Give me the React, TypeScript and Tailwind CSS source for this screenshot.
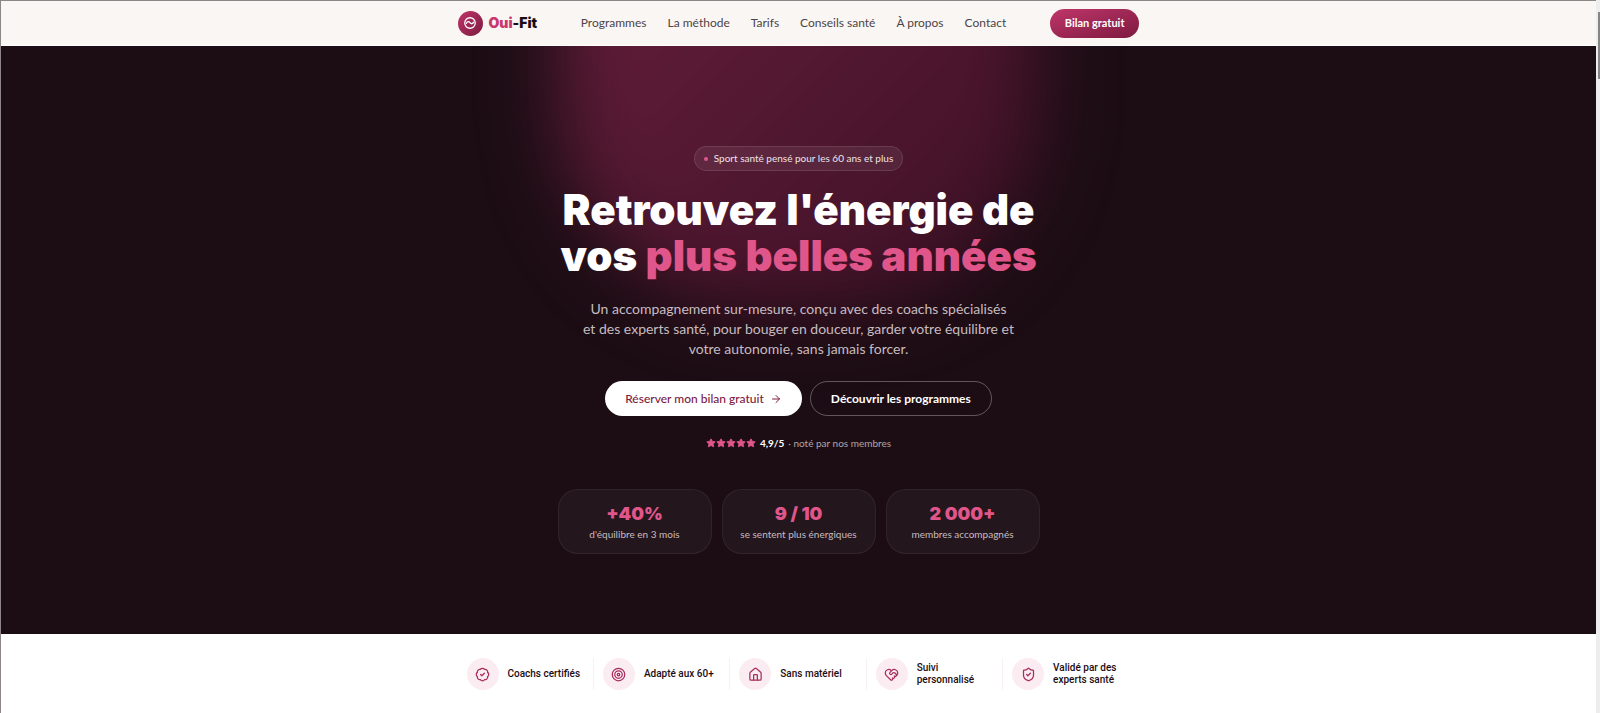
import type { ReactNode } from 'react';
import { ArrowRight, BadgeCheck, HeartHandshake, House, ShieldCheck, Star, Target } from 'lucide-react';

const links = ['Programmes', 'La méthode', 'Tarifs', 'Conseils santé', 'À propos', 'Contact'];

const stats = [
  { value: '+40%', label: "d'équilibre en 3 mois" },
  { value: '9 / 10', label: 'se sentent plus énergiques' },
  { value: '2 000+', label: 'membres accompagnés' },
];

const iconClass = 'size-[15px]';

const assurances: { label: string; icon: ReactNode }[] = [
  { label: 'Coachs certifiés', icon: <BadgeCheck className={iconClass} /> },
  { label: 'Adapté aux 60+', icon: <Target className={iconClass} /> },
  { label: 'Sans matériel', icon: <House className={iconClass} /> },
  { label: 'Suivi personnalisé', icon: <HeartHandshake className={iconClass} /> },
  { label: 'Validé par des experts santé', icon: <ShieldCheck className={iconClass} /> },
];

function Logo() {
  return (
    <a href="#" className="flex items-center gap-1.5">
      <span className="flex size-[25px] items-center justify-center rounded-full bg-linear-to-br from-[#c0366a] to-[#7d1a40] text-white">
        <svg viewBox="0 0 24 24" className="size-3.5" fill="none" stroke="currentColor" strokeWidth="2.2" strokeLinecap="round" aria-hidden="true">
          <circle cx="12" cy="12" r="9" />
          <path d="M6 12.500c1.500-3.500 4-3.500 6-1s4.500 2.500 6-1" />
        </svg>
      </span>
      <span className="font-['Inter','Liberation_Sans',sans-serif] text-sm font-black text-[#1c0d14]">
        <span className="text-[#c9386d]">Oui</span>-Fit
      </span>
    </a>
  );
}

function Header() {
  return (
    <header className="border-t border-[#8d8587] bg-[#faf6f4]">
      <div className="mx-auto flex h-11 max-w-[682px] items-center justify-between">
        <Logo />
        <nav className="flex gap-[21px] text-xs text-[#4d4447]">
          {links.map((link) => (
            <a key={link} href="#">{link}</a>
          ))}
        </nav>
        <button className="h-[29px] rounded-full bg-linear-to-br from-[#c0366a] to-[#7d1a40] px-[15px] text-[11px] font-bold text-white">
          Bilan gratuit
        </button>
      </div>
    </header>
  );
}

function Hero() {
  return (
    <section className="relative isolate mt-px overflow-hidden bg-[#1c0d14] pt-[100px] pb-20 text-center text-white">
      <div className="absolute -top-[220px] left-1/2 -z-10 h-[480px] w-[480px] -translate-x-1/2 rounded-[200px] bg-linear-to-br from-[#6b203f] to-[#3c1025] blur-[36px]" />
      <div className="mx-auto flex max-w-[482px] flex-col items-center">
        <p className="flex h-[25px] items-center gap-1.5 rounded-full border border-white/10 bg-white/7 px-[9px] text-[10px] text-[#efe3e8]">
          <span className="size-1 rounded-full bg-[#e0568a]" />
          Sport santé pensé pour les 60 ans et plus
        </p>
        <h1 className="mt-4 font-['Inter','Liberation_Sans',sans-serif] text-[42px] leading-[46px] font-black whitespace-nowrap">
          Retrouvez l'énergie de
          <br />
          vos <span className="text-[#e0568a]">plus belles années</span>
        </h1>
        <p className="mt-5 text-[14px] leading-[20px] text-[#c6bcc0]">
          Un accompagnement sur-mesure, conçu avec des coachs spécialisés
          <br />
          et des experts santé, pour bouger en douceur, garder votre équilibre et
          <br />
          votre autonomie, sans jamais forcer.
        </p>
        <div className="mt-[22px] flex gap-2">
          <button className="flex h-[35px] items-center gap-1.5 rounded-full bg-white px-5 text-xs font-medium text-[#7d1a40]">
            Réserver mon bilan gratuit
            <ArrowRight className="size-3" />
          </button>
          <button className="h-[35px] rounded-full border border-white/30 px-5 text-xs font-bold">Découvrir les programmes</button>
        </div>
        <div className="mt-5 flex items-center gap-1 text-[10px] leading-[14px] text-[#b0a5aa]">
          <span className="flex text-[#e0568a]">
            {[1, 2, 3, 4, 5].map((n) => (
              <Star key={n} className="size-[10px]" fill="currentColor" />
            ))}
          </span>
          <strong className="text-white">4,9/5</strong>
          <span>· noté par nos membres</span>
        </div>
        <dl className="mt-[39px] grid w-full grid-cols-3 gap-[10px]">
          {stats.map((stat) => (
            <div key={stat.value} className="flex h-[65px] flex-col-reverse justify-center rounded-[20px] border border-white/6 bg-white/4">
              <dt className="text-[10px] leading-[16px] whitespace-nowrap text-[#c6bcc0]">{stat.label}</dt>
              <dd className="font-['Inter','Liberation_Sans',sans-serif] text-lg leading-6 font-black text-[#e0568a]">{stat.value}</dd>
            </div>
          ))}
        </dl>
      </div>
    </section>
  );
}

function Assurances() {
  return (
    <section className="bg-white py-6">
      <ul className="mx-auto grid max-w-[682px] grid-cols-5 divide-x divide-[#f8f1f4]">
        {assurances.map((item) => (
          <li key={item.label} className="flex h-8 items-center gap-[9px] px-[9px] font-['Roboto','Liberation_Sans',sans-serif] text-[10px] leading-3 font-medium text-[#1c0d14]">
            <span className="flex size-8 shrink-0 items-center justify-center rounded-full bg-[#fbecf2] text-[#a82c5c]">{item.icon}</span>
            {item.label}
          </li>
        ))}
      </ul>
    </section>
  );
}

export default function App() {
  return (
    <div className="flex min-h-screen bg-white font-['Lato','Liberation_Sans',sans-serif]">
      <main className="min-w-0 flex-1 border-l border-[#8d8587]">
        <Header />
        <Hero />
        <Assurances />
      </main>
      <div className="w-1 bg-[#eeedee]">
        <div className="mt-3 ml-0.5 h-[67px] bg-[#858585]" />
      </div>
    </div>
  );
}
